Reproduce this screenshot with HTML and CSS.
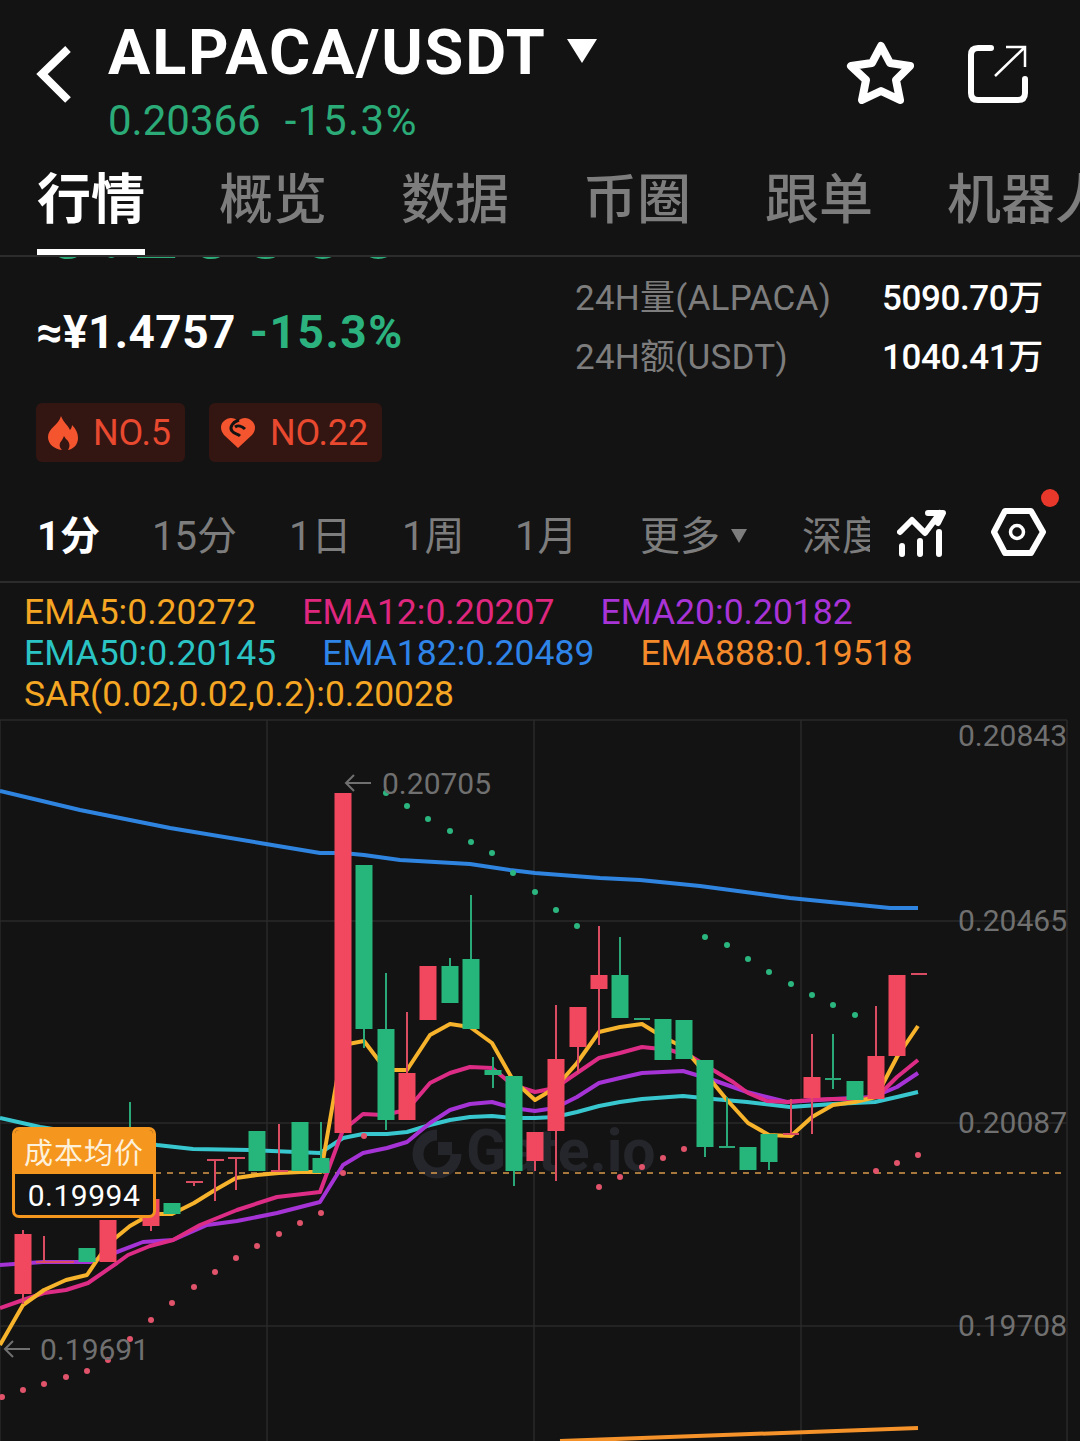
FILE: index.html
```html
<!DOCTYPE html>
<html lang="zh">
<head>
<meta charset="utf-8">
<title>ALPACA/USDT</title>
<link rel="stylesheet" href="styles.css">
</head>
<body>
<div class="page">
	<div class="header">
		<svg class="back" width="40" height="60" viewBox="0 0 40 60"><path d="M33 4 7 29l26 26" fill="none" stroke="#fff" stroke-width="8"/></svg>
		<div class="title">
			<div class="pair">ALPACA/USDT<span class="caret"></span></div>
			<div class="last"><span>0.20366</span><span class="pct">-15.3%</span></div>
		</div>
		<svg class="star" width="68" height="64" viewBox="0 0 68 64"><path d="M35 6 44 23 64 26 50 40 54 60 35 51 16 60 20 40 5 26 26 23Z" fill="none" stroke="#fff" stroke-width="8" stroke-linejoin="round"/></svg>
		<svg class="share" width="62" height="60" viewBox="0 0 62 60">
			<path d="M24 4H11Q4 4 4 11V49Q4 56 11 56H51Q58 56 58 49V35" fill="none" stroke="#fff" stroke-width="6" stroke-linecap="round"/>
			<path d="M28 32 57 4M39 3H58V23" fill="none" stroke="#fff" stroke-width="2.5"/>
		</svg>
	</div>

	<div class="tabs">
		<div class="tab on">行情</div>
		<div class="tab">概览</div>
		<div class="tab">数据</div>
		<div class="tab">币圈</div>
		<div class="tab">跟单</div>
		<div class="tab">机器人</div>
	</div>

	<div class="info">
		<div class="scrolled"><div>0.20366</div></div>
		<div class="quote">
			<div class="cny"><b>≈¥1.4757</b><b class="down">-15.3%</b></div>
			<div class="volume">
				<div class="vol-row"><span>24H量(ALPACA)</span><b>5090.70万</b></div>
				<div class="vol-row"><span>24H额(USDT)</span><b>1040.41万</b></div>
			</div>
		</div>
		<div class="ranks">
			<div class="rank">
				<svg width="30" height="34" viewBox="0 0 30 34"><path d="M13 0c2 6 7 9 9 14 1-1 2-3 2-5 4 4 6 8 6 13 0 6-4 11-10 12 2-3 2-6 0-9-1-1-3-3-4-5-1 3-3 5-4 7-1 3 0 5 2 7C6 33 0 28 0 21 0 12 11 9 13 0z" fill="#f4552f"/></svg>
				NO.5
			</div>
			<div class="rank">
				<svg width="34" height="30" viewBox="0 0 34 30"><path d="M17 30 3 17C-1 12-1 6 3 3 7-1 13-1 17 3 21-1 27-1 31 3 35 7 35 12 31 17Z" fill="#f4552f"/><path d="M18 2C12 4 8 9 11 13 13 16 17 16 19 18M14 9C17 7 21 8 24 11" fill="none" stroke="#131313" stroke-width="3"/></svg>
				NO.22
			</div>
		</div>
	</div>

	<div class="periods">
		<div class="period on">1分</div>
		<div class="period wide">15分</div>
		<div class="period">1日</div>
		<div class="period">1周</div>
		<div class="period month">1月</div>
		<div class="period more">更多<span class="caret-sm"></span></div>
		<div class="period depth">深度</div>
		<svg class="trend" width="52" height="52" viewBox="0 0 52 52">
			<path d="M5 41V49M23 36V49M42 27V49" stroke="#fff" stroke-width="6" stroke-linecap="round" fill="none"/>
			<path d="M3 27 15 15 28 28 43 8M31 8H46L41 18" stroke="#fff" stroke-width="6" stroke-linejoin="round" stroke-linecap="round" fill="none"/>
		</svg>
		<div class="gear">
			<svg width="56" height="50" viewBox="0 0 56 50"><path d="M15 4H41L53 25 41 46H15L4 25Z" fill="none" stroke="#fff" stroke-width="6" stroke-linejoin="round"/><circle cx="27" cy="25" r="6.5" fill="none" stroke="#fff" stroke-width="3.5"/></svg>
			<span class="dot"></span>
		</div>
	</div>

	<div class="legend">
		<div class="legend-row"><span class="c-yellow">EMA5:0.20272</span><span class="c-pink">EMA12:0.20207</span><span class="c-purple">EMA20:0.20182</span></div>
		<div class="legend-row"><span class="c-cyan">EMA50:0.20145</span><span class="c-blue">EMA182:0.20489</span><span class="c-orange">EMA888:0.19518</span></div>
		<div class="legend-row"><span class="c-yellow">SAR(0.02,0.02,0.2):0.20028</span></div>
	</div>

	<div class="chart">
		<svg width="1080" height="723" viewBox="0 718 1080 723">
			<!-- grid -->
			<path d="M0 720H1067M0 921H1067M0 1123H1067M0 1326H1067M0 720V1441M267 720V1441M534 720V1441M801 720V1441M1067 720V1441" stroke="#2a2a2a" stroke-width="1.5" fill="none"/>

			<!-- watermark -->
			<path d="M437 1135A19 19 0 1 0 456 1154" fill="none" stroke="#25262c" stroke-width="11"/>
			<rect x="438" y="1142" width="14" height="13" fill="#25262c"/>
			<text class="mark" x="466" y="1171">Gate.io</text>

			<line x1="155" y1="1173" x2="1067" y2="1173" stroke="#d99a4a" stroke-width="1.5" stroke-dasharray="6 6"/>

			<!-- ema -->
			<g fill="none" stroke-width="4" stroke-linejoin="round">
				<polyline stroke="#2f84e0" points="0,791 80,810 170,828 260,843 320,853 343,853 364,855 400,860 470,864 510,870 535,873 600,878 640,880 700,886 790,898 850,904 890,908 918,908"/>
				<polyline stroke="#f5922a" points="560,1441 918,1428"/>
				<polyline stroke="#39c7cf" points="0,1118 40,1127 157,1145 193,1149 250,1150 320,1153 343,1138 363,1134 387,1134 407,1132 430,1125 450,1120 470,1117 492,1116 513,1118 535,1118 555,1117 577,1112 599,1106 620,1102 642,1099 683,1096 713,1099 747,1102 790,1107 833,1104 875,1102 897,1097 918,1092"/>
				<polyline stroke="#a533d6" points="0,1265 43,1262 90,1262 117,1252 143,1242 173,1240 207,1225 237,1221 277,1213 320,1202 343,1165 363,1153 387,1148 407,1142 430,1123 450,1110 470,1104 492,1102 513,1108 535,1111 555,1108 577,1097 599,1083 620,1078 642,1073 683,1071 713,1080 747,1092 787,1102 833,1099 873,1097 897,1087 918,1073"/>
				<polyline stroke="#dd2c86" points="0,1308 23,1300 44,1293 66,1290 88,1283 117,1263 128,1255 150,1246 173,1240 200,1225 237,1210 277,1197 320,1192 343,1130 352,1123 363,1114 383,1115 407,1110 430,1083 450,1073 470,1067 492,1068 513,1085 535,1092 555,1088 577,1073 599,1058 620,1053 642,1047 670,1050 692,1057 713,1070 733,1082 748,1093 767,1101 787,1102 810,1100 833,1099 855,1099 877,1097 897,1077 918,1060"/>
				<polyline stroke="#f7b32b" points="0,1345 23,1305 44,1290 66,1280 87,1275 108,1244 130,1226 151,1214 172,1214 194,1203 215,1190 236,1178 257,1175 279,1173 300,1172 321,1172 343,1045 364,1041 386,1070 407,1070 430,1035 450,1024 470,1027 492,1043 513,1080 535,1100 555,1088 577,1063 599,1032 620,1027 642,1024 663,1037 683,1047 705,1073 727,1100 748,1123 769,1135 791,1136 812,1117 833,1105 855,1102 876,1097 897,1057 918,1026"/>
			</g>

			<!-- candles -->
			<path class="wick-r" d="M23 1230V1304M44 1236V1262M36 1262H74M108 1220V1262M151 1226V1231M186 1182H203M194 1182V1186M207 1160H224M215 1160V1201M228 1158H245M236 1158V1190M279 1124V1171M271 1171H288M407 1012V1073M535 1161V1171M556 1005V1181M578 1047V1073M599 926V1045M791 1099V1135M783 1134H799M812 1034V1134M876 1006V1056M911 974H927"/>
			<path class="wick-g" d="M130 1102V1128M321 1122V1158M364 1029V1048M386 973V1130M450 958V966M471 895V959M493 1057V1088M514 1171V1186M620 937V975M634 1019H650M705 1147V1157M727 1097V1147M719 1147H735M769 1162V1170M833 1034V1089M825 1079H841"/>
			<path class="body-r" d="M23 1234V1294M108 1220V1262M151 1199V1226M343 793V1133M407 1073V1120M428 966V1020M535 1132V1161M556 1059V1131M578 1007V1047M599 975V989M812 1077V1098M876 1056V1099M897 975V1056"/>
			<path class="body-g" d="M87 1248V1262M172 1203V1214M257 1131V1171M300 1122V1171M321 1158V1173M364 865V1029M386 1029V1120M450 966V1003M471 959V1029M493 1070V1075M514 1076V1171M620 975V1018M663 1019V1060M684 1020V1059M705 1060V1147M748 1147V1170M769 1134V1162M855 1081V1100"/>

			<!-- sar -->
			<g fill="#2bb67f">
				<circle cx="386" cy="793" r="3"/><circle cx="407" cy="806" r="3"/><circle cx="428" cy="819" r="3"/><circle cx="450" cy="831" r="3"/><circle cx="471" cy="842" r="3"/><circle cx="492" cy="853" r="3"/><circle cx="513" cy="873" r="3"/><circle cx="535" cy="892" r="3"/><circle cx="556" cy="910" r="3"/><circle cx="577" cy="926" r="3"/>
				<circle cx="705" cy="937" r="3"/><circle cx="727" cy="945" r="3"/><circle cx="748" cy="959" r="3"/><circle cx="769" cy="972" r="3"/><circle cx="791" cy="984" r="3"/><circle cx="812" cy="995" r="3"/><circle cx="833" cy="1005" r="3"/><circle cx="855" cy="1015" r="3"/>
			</g>
			<g fill="#e0536a">
				<circle cx="2" cy="1397" r="3"/><circle cx="23" cy="1390" r="3"/><circle cx="44" cy="1384" r="3"/><circle cx="66" cy="1377" r="3"/><circle cx="87" cy="1371" r="3"/><circle cx="108" cy="1360" r="3"/><circle cx="130" cy="1339" r="3"/><circle cx="151" cy="1320" r="3"/><circle cx="172" cy="1303" r="3"/><circle cx="194" cy="1287" r="3"/><circle cx="215" cy="1272" r="3"/><circle cx="236" cy="1258" r="3"/><circle cx="257" cy="1246" r="3"/><circle cx="279" cy="1234" r="3"/><circle cx="300" cy="1223" r="3"/><circle cx="321" cy="1213" r="3"/><circle cx="343" cy="1173" r="3"/><circle cx="364" cy="1136" r="3"/>
				<circle cx="599" cy="1187" r="3"/><circle cx="620" cy="1177" r="3"/><circle cx="642" cy="1167" r="3"/><circle cx="663" cy="1158" r="3"/><circle cx="684" cy="1149" r="3"/><circle cx="876" cy="1171" r="3"/><circle cx="897" cy="1163" r="3"/><circle cx="918" cy="1155" r="3"/>
			</g>

			<text class="axis" x="1067" y="746" text-anchor="end">0.20843</text>
			<text class="axis" x="1067" y="931" text-anchor="end">0.20465</text>
			<text class="axis" x="1067" y="1133" text-anchor="end">0.20087</text>
			<text class="axis" x="1067" y="1336" text-anchor="end">0.19708</text>
			<path class="arrow" d="M371 783H346M354 775 346 783 354 791"/>
			<text class="axis" x="382" y="794">0.20705</text>
			<path class="arrow" d="M30 1349H5M13 1341 5 1349 13 1357"/>
			<text class="axis" x="40" y="1360">0.19691</text>
		</svg>
		<div class="cost">
			<div class="cost-name">成本均价</div>
			<div class="cost-price">0.19994</div>
		</div>
	</div>
</div>
</body>
</html>
```

FILE: styles.css
```css
*{margin:0;padding:0;box-sizing:border-box;}
body{background:#131313;font-family:"Roboto","Noto Sans CJK SC",sans-serif;color:#fff;}
.page{width:1080px;height:1441px;overflow:hidden;background:#131313;}

.header{height:150px;display:flex;align-items:flex-start;}
.back{margin:45px 0 0 35px;}
.title{margin-left:33px;width:738px;}
.pair{font-size:63px;line-height:72px;font-weight:700;margin-top:17px;letter-spacing:1.8px;display:flex;align-items:flex-start;}
.caret{margin:22px 0 0 20px;border-style:solid;border-width:24px 15px 0;border-color:#fff transparent transparent;}
.last{font-size:42px;line-height:48px;color:#2bab78;display:flex;gap:24px;margin-top:8px;}
.pct{letter-spacing:1.5px;}
.star{margin-top:40px;}
.share{margin:44px 0 0 53px;}

.tabs{height:107px;display:flex;gap:74px;padding:0 0 0 37px;border-bottom:2px solid #2c2c2c;white-space:nowrap;overflow:hidden;}
.tab{height:105px;font-size:54px;line-height:102px;color:#7d7d7d;font-weight:500;flex:none;}
.tab.on{color:#fff;border-bottom:6px solid #fff;font-weight:700;}

.info{height:218px;padding:0 36px;}
.scrolled{height:3px;overflow:hidden;}
.scrolled div{font-size:80px;line-height:70px;margin:-61px 0 0 9px;color:#2bab78;letter-spacing:10px;font-weight:500;}
.quote{display:flex;justify-content:space-between;margin-top:9px;height:118px;}
.cny{font-size:46px;display:flex;gap:14px;align-items:center;padding-top:8px;letter-spacing:.4px;}
.down{color:#2bb27e;letter-spacing:1.6px;}
.volume{width:469px;}
.vol-row{display:flex;justify-content:space-between;height:59px;line-height:59px;font-size:35px;color:#7d7d7d;letter-spacing:.25px;}
.vol-row b{color:#fff;font-size:35px;font-weight:500;width:162px;white-space:nowrap;letter-spacing:-.4px;}
.ranks{display:flex;gap:24px;margin-top:16px;}
.rank{height:59px;padding:0 14px 0 12px;background:#331512;border-radius:6px;color:#e8492f;font-size:36px;display:flex;align-items:center;gap:15px;letter-spacing:-.1px;}

.periods{height:108px;display:flex;align-items:flex-start;padding:0 0 0 37px;border-bottom:2px solid #2c2c2c;position:relative;}
.period{font-size:40px;line-height:44px;color:#7d7d7d;margin-top:40px;white-space:nowrap;width:113px;flex:none;}
.period.on{color:#fff;font-weight:700;width:115px;}
.period.wide{width:137px;}
.period.month{width:125px;}
.period.more{width:162px;}
.period.depth{width:68px;overflow:hidden;}
.caret-sm{display:inline-block;vertical-align:middle;margin:-6px 0 0 11px;border-style:solid;border-width:14px 8px 0;border-color:#7d7d7d transparent transparent;}
.trend{margin:30px 0 0 27px;flex:none;}
.gear{margin:32px 0 0 41px;position:relative;}
.dot{position:absolute;top:-18px;left:51px;width:18px;height:18px;border-radius:50%;background:#e8382b;}

.legend{height:135px;padding:9px 0 0 24px;font-size:35.5px;line-height:41px;}
.legend-row{display:flex;gap:46px;white-space:nowrap;}
.c-yellow{color:#f5a623;}
.c-pink{color:#e0277f;}
.c-purple{color:#a833d6;}
.c-cyan{color:#2bc4c4;}
.c-blue{color:#2f84e8;}
.c-orange{color:#f58a2b;}

.chart{position:relative;height:723px;}
.chart svg{display:block;}
.axis{font-size:30px;fill:#707070;font-family:"Roboto",sans-serif;}
.arrow{fill:none;stroke:#707070;stroke-width:2;}
.mark{font-size:59px;font-weight:700;fill:#25262c;font-family:"Roboto",sans-serif;}
.wick-r,.wick-g{fill:none;stroke-width:2;}
.wick-r{stroke:#d94c62;}
.wick-g{stroke:#2aa877;}
.body-r,.body-g{fill:none;stroke-width:17;}
.body-r{stroke:#f2485f;}
.body-g{stroke:#26b57a;}

.cost{position:absolute;left:12px;top:409px;width:144px;height:91px;border:3px solid #f5971f;border-radius:7px;background:#131313;overflow:hidden;text-align:center;}
.cost-name{height:44px;background:#f5971f;color:#fdf1dc;font-size:29px;line-height:48px;letter-spacing:1px;}
.cost-price{font-size:30px;line-height:44px;color:#fff;letter-spacing:.5px;}
```
